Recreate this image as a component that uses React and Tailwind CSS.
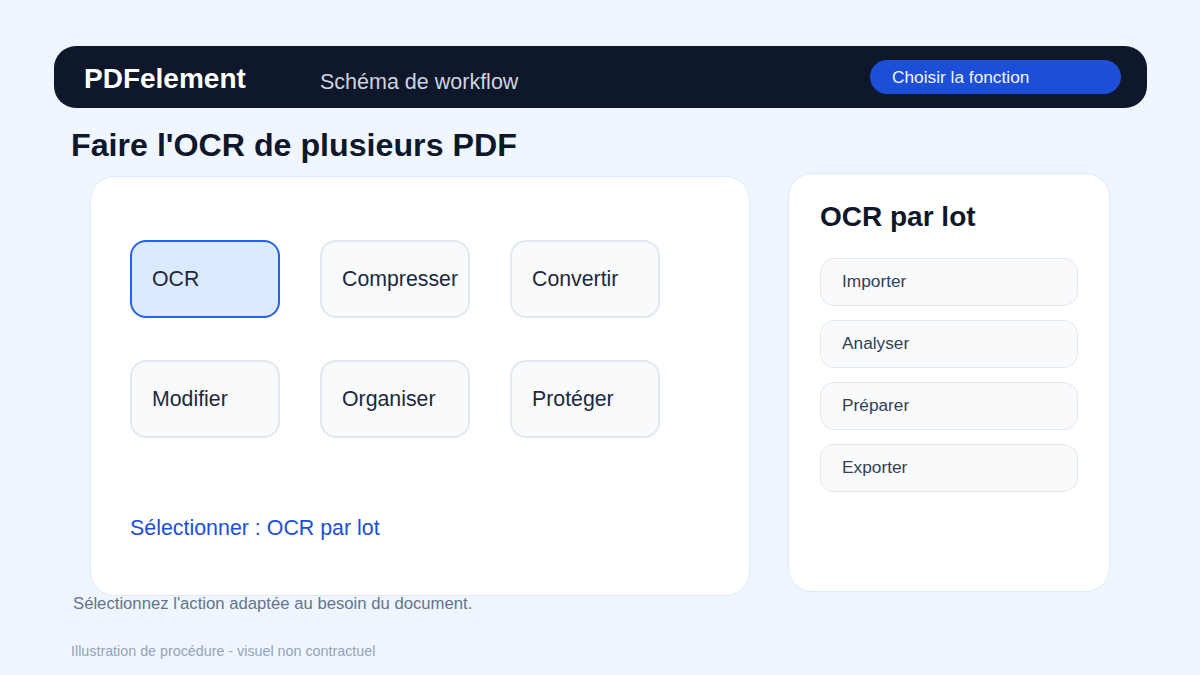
const actions = [
  { label: 'OCR', active: true },
  { label: 'Compresser' },
  { label: 'Convertir' },
  { label: 'Modifier' },
  { label: 'Organiser' },
  { label: 'Protéger' },
];

const steps = ['Importer', 'Analyser', 'Préparer', 'Exporter'];

function ActionTile({ label, active }) {
  return (
    <div
      className={
        active
          ? 'flex items-center h-[78px] pl-[20px] rounded-[16px] border-2 border-[#2563eb] bg-[#dbeafe]'
          : 'flex items-center h-[78px] pl-[20px] rounded-[16px] border-2 border-[#e2e8f0] bg-[#f8fafc]'
      }
    >
      <span className="text-[21.3px] leading-[28px] text-[#1e293b] whitespace-nowrap">{label}</span>
    </div>
  );
}

export default function App() {
  return (
    <div
      className="w-[1200px] h-[675px] overflow-hidden bg-[#eff6ff] pt-[46px]"
      style={{ fontFamily: '"Liberation Sans", Arial, sans-serif' }}
    >
      <header className="ml-[54px] w-[1093px] h-[62px] rounded-[22px] bg-[#0f172a] flex items-center pl-[30px] pr-[26px]">
        <span className="mt-[3px] w-[236px] text-[28px] leading-[34px] font-bold text-white">PDFelement</span>
        <span className="mt-[10px] text-[21.5px] leading-[28px] text-[#cbd5e1]">Schéma de workflow</span>
        <div className="ml-auto w-[251px] h-[34px] rounded-full bg-[#1d4ed8] flex items-center pl-[22px]">
          <span className="text-[17.3px] leading-[22px] text-[#eff6ff]">Choisir la fonction</span>
        </div>
      </header>

      <main className="pl-[71px]">
        <h1 className="mt-[18px] text-[32.2px] leading-[38px] font-bold text-[#0f172a]">
          Faire l'OCR de plusieurs PDF
        </h1>

        <div className="flex items-start ml-[19px] mt-[9px] gap-[38px]">
          <section className="mt-[3px] w-[660px] h-[420px] rounded-[24px] border border-[#dbeafe] bg-white pt-[63px] pl-[39px]">
            <div className="grid grid-cols-[150px_150px_150px] gap-x-[40px] gap-y-[42px]">
              {actions.map((a) => (
                <ActionTile key={a.label} {...a} />
              ))}
            </div>
            <p className="mt-[76px] text-[21.4px] leading-[28px] text-[#1d4ed8]">Sélectionner : OCR par lot</p>
          </section>

          <aside className="w-[322px] h-[419px] rounded-[24px] border border-[#dbeafe] bg-white pt-[26px] px-[31px]">
            <h2 className="text-[28px] leading-[34px] font-bold text-[#0f172a]">OCR par lot</h2>
            <ul className="mt-[24px] flex flex-col gap-[14px]">
              {steps.map((s) => (
                <li
                  key={s}
                  className="w-[258px] h-[48px] flex items-center pl-[21px] rounded-[14px] border border-[#e2e8f0] bg-[#f8fafc] text-[17.3px] text-[#334155]"
                >
                  {s}
                </li>
              ))}
            </ul>
          </aside>
        </div>

        <p className="-mt-[2px] ml-[2px] text-[16.7px] leading-[20px] text-[#64748b]">
          Sélectionnez l'action adaptée au besoin du document.
        </p>
        <p className="mt-[28px] text-[14.3px] leading-[18px] text-[#94a3b8]">
          Illustration de procédure - visuel non contractuel
        </p>
      </main>
    </div>
  );
}
